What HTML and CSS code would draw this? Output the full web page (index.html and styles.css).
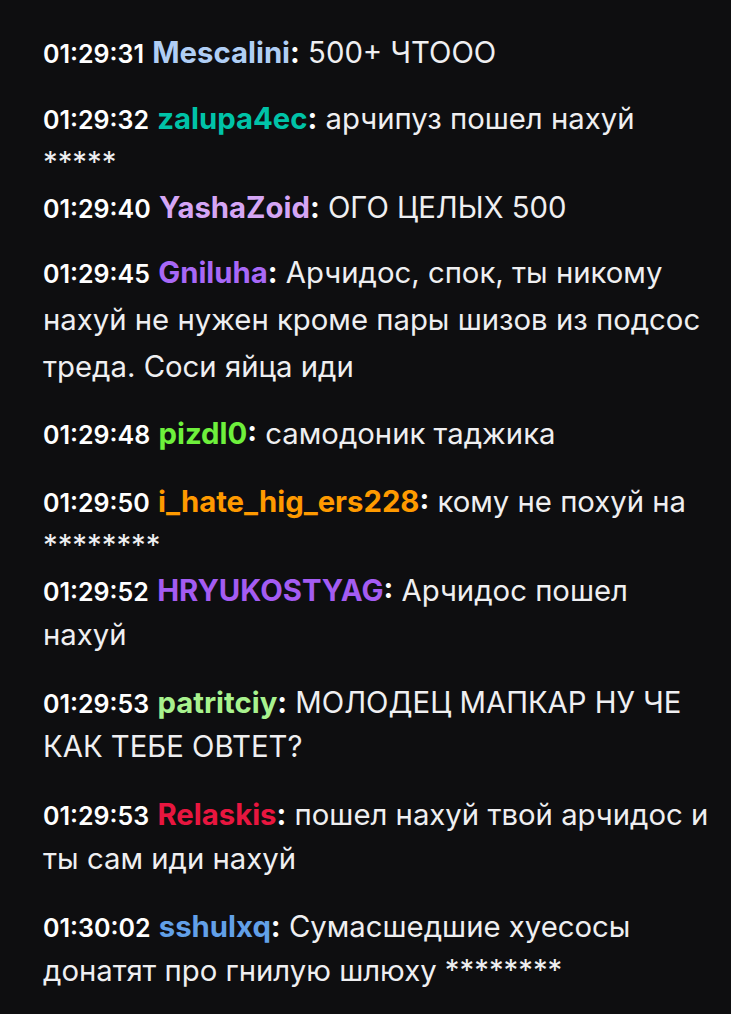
FILE: index.html
```html
<!DOCTYPE html>
<html lang="ru">
<head>
<meta charset="utf-8">
<title>Chat log</title>
<link rel="stylesheet" href="styles.css">
</head>
<body>
<div class="chat">
  <div class="msg msg--first"><span class="time">01:29:31</span> <span class="user u-mescalini">Mescalini</span><span class="colon">:</span> 500+ ЧТООО</div>
  <div class="msg msg--tight"><span class="time">01:29:32</span> <span class="user u-zalupa">zalupa4ec</span><span class="colon">:</span> арчипуз пошел нахуй *****</div>
  <div class="msg msg--short"><span class="time">01:29:40</span> <span class="user u-yasha">YashaZoid</span><span class="colon">:</span> ОГО ЦЕЛЫХ 500</div>
  <div class="msg msg--tall"><span class="time">01:29:45</span> <span class="user u-gniluha">Gniluha</span><span class="colon">:</span> Арчидос, спок, ты никому нахуй не нужен кроме пары шизов из подсос треда. Соси яйца иди</div>
  <div class="msg"><span class="time">01:29:48</span> <span class="user u-pizdl">pizdl0</span><span class="colon">:</span> самодоник таджика</div>
  <div class="msg msg--tight"><span class="time">01:29:50</span> <span class="user u-ihate">i_hate_hig_ers228</span><span class="colon">:</span> кому не похуй на ********</div>
  <div class="msg"><span class="time">01:29:52</span> <span class="user u-hryuk">HRYUKOSTYAG</span><span class="colon">:</span> Арчидос пошел нахуй</div>
  <div class="msg"><span class="time">01:29:53</span> <span class="user u-patr">patritciy</span><span class="colon">:</span> МОЛОДЕЦ МАПКАР НУ ЧЕ КАК ТЕБЕ ОВТЕТ?</div>
  <div class="msg"><span class="time">01:29:53</span> <span class="user u-relaskis">Relaskis</span><span class="colon">:</span> пошел нахуй твой арчидос и ты сам иди нахуй</div>
  <div class="msg"><span class="time">01:30:02</span> <span class="user u-sshulxq">sshulxq</span><span class="colon">:</span> Сумасшедшие хуесосы донатят про гнилую шлюху ********</div>
</div>
</body>
</html>
```

FILE: styles.css
```css
html, body {
  margin: 0;
  padding: 0;
  background: #0e0e10;
}
body {
  color: #efeff1;
  font-family: "Inter", "Noto Sans", sans-serif;
  font-size: 29.3px;
}
.chat {
  padding: 31px 19px 0 43px;
}
.msg {
  line-height: 44px;
  padding-bottom: 24px;
}
.msg--first {
  padding-bottom: 22px;
}
.msg--tight {
  padding-bottom: 1px;
}
.msg--short {
  padding-bottom: 19px;
}
.msg--tall {
  line-height: 47px;
  padding-bottom: 22px;
}
.time {
  font-size: 25px;
  line-height: 1;
  font-weight: 600;
  color: #ffffff;
}
.user {
  font-weight: 700;
}
.colon {
  font-weight: 700;
  color: #ffffff;
}
.u-mescalini { color: #b0cef5; }
.u-zalupa { color: #00c3a8; }
.u-yasha { color: #d5a6f5; }
.u-gniluha { color: #a868f7; }
.u-pizdl { color: #6ef03c; }
.u-ihate { color: #ff9a00; }
.u-hryuk { color: #a45cf2; }
.u-patr { color: #a8f28e; }
.u-relaskis { color: #e8163f; }
.u-sshulxq { color: #62a0e8; }
```
